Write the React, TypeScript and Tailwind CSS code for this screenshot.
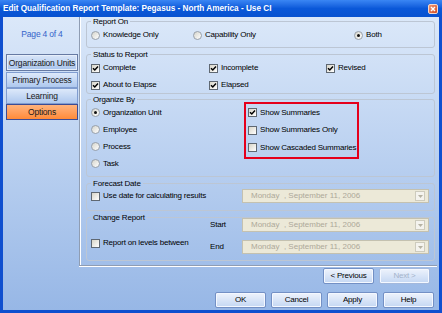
import React from "react";

const Radio = ({ checked = false }: { checked?: boolean }) => (
  <span className="w-[9px] h-[9px] shrink-0 rounded-full border border-[#98a0aa] bg-gradient-to-br from-[#d6d5cc] to-white flex items-center justify-center">
    {checked && <span className="w-[3px] h-[3px] rounded-full bg-[#111]" />}
  </span>
);

const Check = ({ checked = false }: { checked?: boolean }) => (
  <span className="w-[9px] h-[9px] shrink-0 border border-[#5f6872] bg-gradient-to-br from-[#d8d5c8] to-white flex items-center justify-center">
    {checked && (
      <svg width="7" height="7" viewBox="0 0 7 7">
        <path d="M1 3.2 L2.8 5 L6 1.6" stroke="#000" strokeWidth="1.5" fill="none" />
      </svg>
    )}
  </span>
);

const Opt = ({
  kind,
  checked = false,
  label,
  className = "",
}: {
  kind: "radio" | "check";
  checked?: boolean;
  label: string;
  className?: string;
}) => (
  <div className={"flex items-center gap-[3px] " + className}>
    {kind === "radio" ? <Radio checked={checked} /> : <Check checked={checked} />}
    <span className="whitespace-nowrap">{label}</span>
  </div>
);

const Group = ({
  title,
  className = "",
  children,
}: {
  title: string;
  className?: string;
  children: React.ReactNode;
}) => (
  <fieldset className={"border border-[#bcc6d4] rounded-[3px] px-[4px] min-w-0 " + className}>
    <legend className="px-[2px] leading-[9px]">{title}</legend>
    {children}
  </fieldset>
);

const DateBox = () => (
  <div className="w-[187px] h-[14px] shrink-0 border border-[#c4c1b0] bg-[#ece9d8] flex items-center pl-[8px] pr-[3px] text-[#aca899] tracking-normal">
    <span className="flex-1 whitespace-pre">Monday  , September 11, 2006</span>
    <span className="w-[10px] h-[10px] border border-[#cdcbbd] bg-[#f4f3ee] flex items-center justify-center">
      <svg width="5" height="3" viewBox="0 0 5 3">
        <path d="M0 0h5L2.5 3z" fill="#b5b2a3" />
      </svg>
    </span>
  </div>
);

const Btn = ({ children, disabled = false }: { children: React.ReactNode; disabled?: boolean }) => (
  <div
    className={
      "w-[51px] h-[16px] rounded-[2px] border bg-gradient-to-b from-[#eef3fc] to-[#c4d7f3] shadow-[inset_0_0_0_1px_#f4f8ff] flex items-center justify-center " +
      (disabled ? "text-[#a4b3cb] border-[#a3b8dc]" : "text-black border-[#7390c5]")
    }
  >
    {children}
  </div>
);

const NavBtn = ({
  children,
  variant,
}: {
  children: React.ReactNode;
  variant: "focus" | "normal" | "active";
}) => {
  const cls =
    variant === "active"
      ? "h-[16px] border border-[#3c4c94] bg-gradient-to-b from-[#ffb37c] to-[#ff8a36]"
      : variant === "focus"
      ? "h-[17px] mb-[1px] border border-[#667aa3] shadow-[inset_0_0_0_1px_#e6eefa] bg-gradient-to-b from-[#d9e6f9] to-[#a9c4ec]"
      : "h-[16px] border border-[#809dd0] bg-gradient-to-b from-[#dde9fa] to-[#aec8ee]";
  return <div className={"flex items-center justify-center text-[#1a1a1a] text-[8.5px] " + cls}>{children}</div>;
};

export default function App() {
  return (
    <div className="w-[442px] h-[313px] flex flex-col overflow-hidden font-['Liberation_Sans',Arial,sans-serif] text-[8px] leading-[10px] tracking-[-0.2px] text-black">
      <div className="h-[17px] shrink-0 flex items-center pl-[3px] pr-[4px] bg-gradient-to-b from-[#3a86f4] via-[#0a58d9] to-[#0852d0]">
        <span className="flex-1 text-white font-bold text-[8.2px] font-['Liberation_Sans',sans-serif] tracking-normal whitespace-nowrap">
          Edit Qualification Report Template: Pegasus - North America - Use CI
        </span>
        <span className="w-[10px] h-[10px] rounded-[2px] border border-[#f4d8cc] bg-gradient-to-br from-[#ef9670] to-[#d24a20] flex items-center justify-center">
          <svg width="6" height="6" viewBox="0 0 6 6">
            <path d="M1 1L5 5M5 1L1 5" stroke="#fff" strokeWidth="1.4" />
          </svg>
        </span>
      </div>
      <div className="flex-1 flex flex-col border-x-[3px] border-b-[3px] border-[#0f4fcf] bg-gradient-to-b from-[#dbe8f9] to-[#97b7e6]">
        <div className="flex h-[249px] shrink-0">
          <div className="w-[76px] shrink-0 flex flex-col pl-[3px] pr-[1px]">
            <div className="pt-[12px] h-[37px] text-center text-[#3463c9] text-[8.5px]">Page 4 of 4</div>
            <NavBtn variant="focus">Organization Units</NavBtn>
            <NavBtn variant="normal">Primary Process</NavBtn>
            <NavBtn variant="normal">Learning</NavBtn>
            <NavBtn variant="active">Options</NavBtn>
          </div>
          <div className="w-[358px] shrink-0 flex flex-col border-l border-b border-[#8f9db3] shadow-[inset_1px_0_0_#fff,0_1px_0_#fff] pl-[6px] pr-[2px]">
            <Group title="Report On" className="pb-[3px]">
              <div className="flex items-center h-[18px]">
                <Opt kind="radio" label="Knowledge Only" className="w-[102px]" />
                <Opt kind="radio" label="Capability Only" className="w-[161px]" />
                <Opt kind="radio" checked label="Both" />
              </div>
            </Group>
            <Group title="Status to Report" className="mt-[2px]">
              <div className="pt-[1px] flex flex-col gap-[1px]">
                <div className="flex items-center h-[16px]">
                  <Opt kind="check" checked label="Complete" className="w-[118px]" />
                  <Opt kind="check" checked label="Incomplete" className="w-[117px]" />
                  <Opt kind="check" checked label="Revised" />
                </div>
                <div className="flex items-center h-[16px]">
                  <Opt kind="check" checked label="About to Elapse" className="w-[118px]" />
                  <Opt kind="check" checked label="Elapsed" />
                </div>
              </div>
            </Group>
            <Group title="Organize By" className="mt-[1px] pb-[4px]">
              <div className="flex items-start">
                <div className="w-[153px] flex flex-col">
                  <Opt kind="radio" checked label="Organization Unit" className="h-[17px]" />
                  <Opt kind="radio" label="Employee" className="h-[17px]" />
                  <Opt kind="radio" label="Process" className="h-[17px]" />
                  <Opt kind="radio" label="Task" className="h-[17px]" />
                </div>
                <div className="-mt-[2px] w-[115px] border-2 border-[#e5001c] px-[2px] pb-[0.5px] flex flex-col">
                  <Opt kind="check" checked label="Show Summaries" className="h-[17.5px]" />
                  <Opt kind="check" label="Show Summaries Only" className="h-[17.5px]" />
                  <Opt kind="check" label="Show Cascaded Summaries" className="h-[17.5px]" />
                </div>
              </div>
            </Group>
            <Group title="Forecast Date" className="mt-[2px] pb-[6px]">
              <div className="flex items-center h-[16px]">
                <Opt kind="check" label="Use date for calculating results" className="w-[151px]" />
                <DateBox />
              </div>
            </Group>
            <Group title="Change Report" className="mt-[2px] pb-[6px]">
              <div className="flex items-start">
                <div className="w-[119px] pt-[14px]">
                  <Opt kind="check" label="Report on levels between" className="h-[14px]" />
                </div>
                <div className="-mt-[4px] flex flex-col gap-[8px]">
                  <div className="flex items-center h-[14px]">
                    <span className="w-[32px]">Start</span>
                    <DateBox />
                  </div>
                  <div className="flex items-center h-[14px]">
                    <span className="w-[32px]">End</span>
                    <DateBox />
                  </div>
                </div>
              </div>
            </Group>
          </div>
        </div>
        <div className="flex justify-end gap-[5px] pr-[9px] mt-[2px]">
          <Btn>&lt; Previous</Btn>
          <Btn disabled>Next &gt;</Btn>
        </div>
        <div className="flex justify-end gap-[5px] pr-[5px] mt-[8px]">
          <Btn>OK</Btn>
          <Btn>Cancel</Btn>
          <Btn>Apply</Btn>
          <Btn>Help</Btn>
        </div>
      </div>
    </div>
  );
}
